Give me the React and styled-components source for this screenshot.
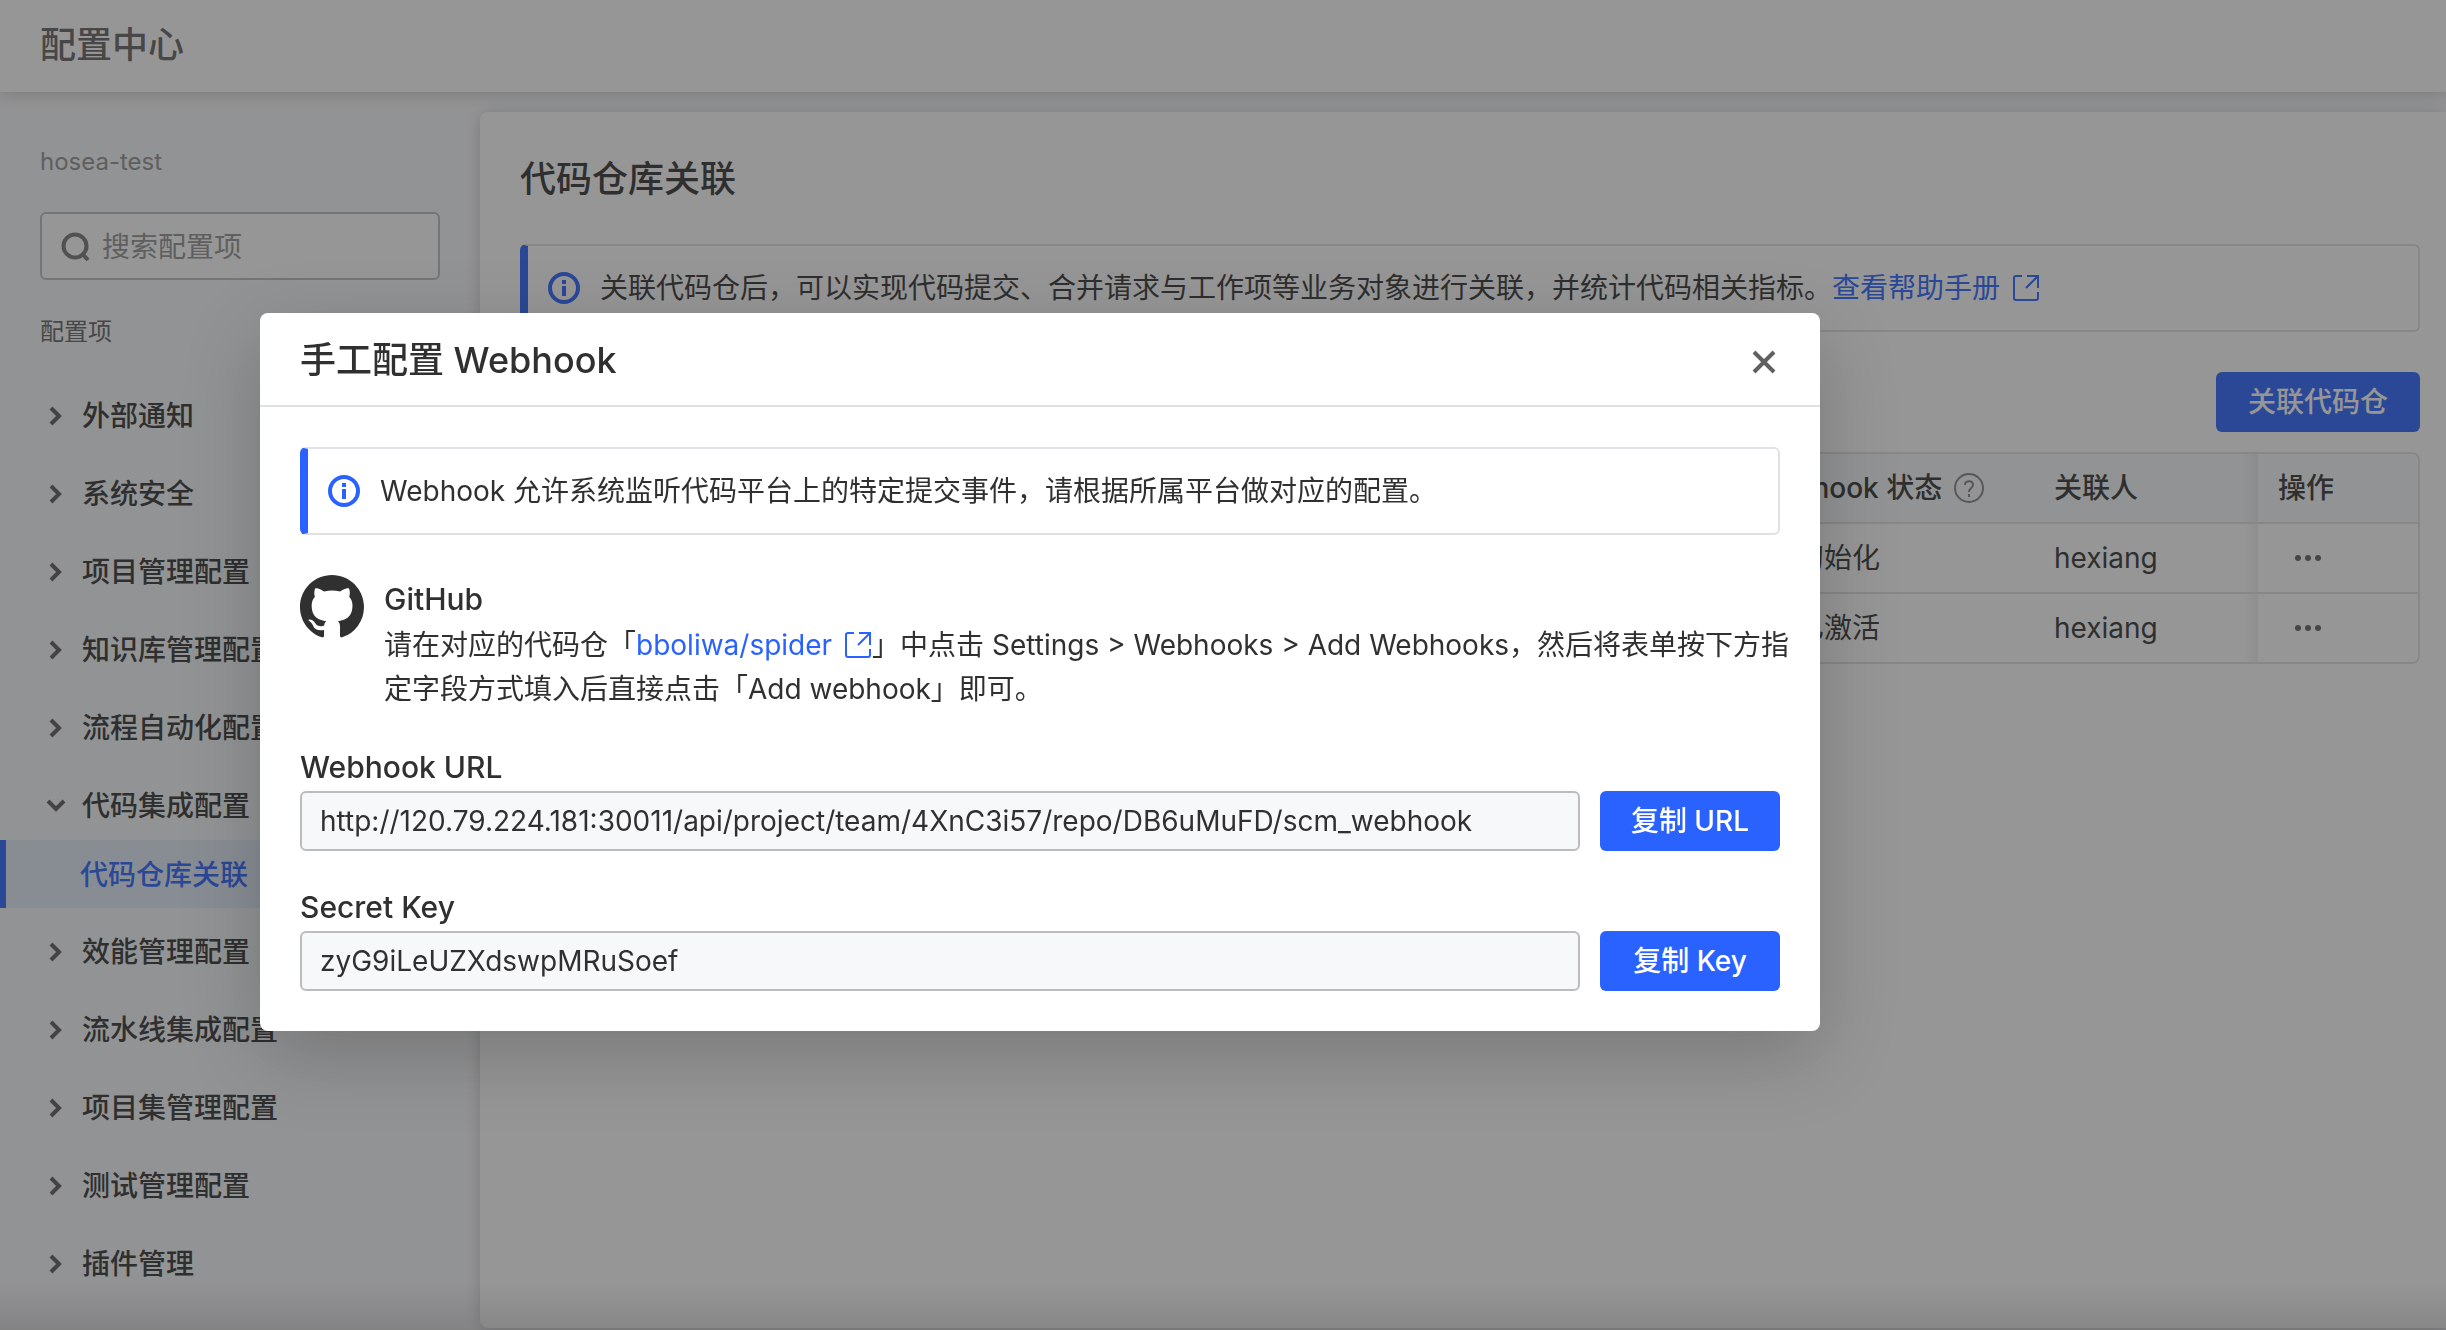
import React, { useState } from "react";
import styled, { createGlobalStyle } from "styled-components";

const menuGroups = [
  { name: "外部通知" },
  { name: "系统安全" },
  { name: "项目管理配置" },
  { name: "知识库管理配置" },
  { name: "流程自动化配置" },
  { name: "代码集成配置", children: ["代码仓库关联"] },
  { name: "效能管理配置" },
  { name: "流水线集成配置" },
  { name: "项目集管理配置" },
  { name: "测试管理配置" },
  { name: "插件管理" },
];

const repos = [
  { id: 1, status: "初始化", color: "#909090", owner: "hexiang" },
  { id: 2, status: "已激活", color: "#24b47e", owner: "hexiang" },
];

const SearchIcon = () => (
  <svg width="32" height="32" viewBox="0 0 32 32" fill="none" stroke="#747474" strokeWidth="4" aria-hidden="true">
    <circle cx="15" cy="15" r="11.5" />
    <path d="M22.5 23l5.5 6" />
  </svg>
);

const Chevron = ({ open }) => (
  <svg width="20" height="20" viewBox="0 0 20 20" fill="none" stroke="#585858" strokeWidth="4" aria-hidden="true">
    {open ? <path d="M2 5l8 8 8-8" /> : <path d="M5 2l8 8-8 8" />}
  </svg>
);

const InfoIcon = () => (
  <svg width="32" height="32" viewBox="0 0 32 32" fill="none" aria-hidden="true">
    <circle cx="16" cy="16" r="14" stroke="#2962ff" strokeWidth="4" />
    <path d="M14 8h4v4h-4zM14 14h4v10h-4z" fill="#2962ff" />
  </svg>
);

const ExternalIcon = () => (
  <svg width="28" height="28" viewBox="0 0 28 28" fill="none" stroke="currentColor" strokeWidth="2" aria-hidden="true">
    <path d="M10 2H4a2 2 0 0 0-2 2v20a2 2 0 0 0 2 2h20a2 2 0 0 0 2-2v-6" />
    <path d="M15 2h11v12M26 2L14 14" />
  </svg>
);

const HelpIcon = () => (
  <svg width="30" height="30" viewBox="0 0 30 30" fill="none" stroke="#808080" strokeWidth="2" aria-hidden="true">
    <circle cx="15" cy="15" r="14" />
    <path d="M11 12c0-5 8-5 8 0 0 3-4 3-4 7M15 21v3" />
  </svg>
);

const MoreIcon = () => (
  <svg width="28" height="8" viewBox="0 0 28 8" fill="#606060" aria-hidden="true">
    <circle cx="4" cy="4" r="3" />
    <circle cx="14" cy="4" r="3" />
    <circle cx="24" cy="4" r="3" />
  </svg>
);

const CloseIcon = () => (
  <svg width="24" height="24" viewBox="0 0 24 24" stroke="#606060" strokeWidth="4" aria-hidden="true">
    <path d="M2 2l20 20M22 2L2 22" />
  </svg>
);

const GithubIcon = () => (
  <svg width="64" height="64" viewBox="0 0 16 16" fill="#303030" aria-hidden="true">
    <path d="M8 0C3.58 0 0 3.58 0 8c0 3.54 2.29 6.53 5.47 7.59.4.07.55-.17.55-.38 0-.19-.01-.82-.01-1.49-2.01.37-2.53-.49-2.69-.94-.09-.23-.48-.94-.82-1.13-.28-.15-.68-.52-.01-.53.63-.01 1.08.58 1.23.82.72 1.21 1.87.87 2.33.66.07-.52.28-.87.51-1.07-1.78-.2-3.64-.89-3.64-3.95 0-.87.31-1.59.82-2.15-.08-.2-.36-1.02.08-2.12 0 0 .67-.21 2.2.82.64-.18 1.32-.27 2-.27.68 0 1.36.09 2 .27 1.53-1.04 2.2-.82 2.2-.82.44 1.1.16 1.92.08 2.12.51.56.82 1.27.82 2.15 0 3.07-1.87 3.75-3.65 3.95.29.25.54.73.54 1.48 0 1.07-.01 1.93-.01 2.2 0 .21.15.46.55.38A8.013 8.013 0 0016 8c0-4.42-3.58-8-8-8z" />
  </svg>
);

function Sidebar() {
  return (
    <Side>
      <TeamName>hosea-test</TeamName>
      <SearchBox>
        <SearchIcon />
        <input type="text" placeholder="搜索配置项" aria-label="搜索配置项" />
      </SearchBox>
      <SideLabel>配置项</SideLabel>
      <MenuList>
        {menuGroups.map((group) => (
          <li key={group.name}>
            <MenuButton type="button">
              <Chevron open={!!group.children} />
              {group.name}
            </MenuButton>
            {group.children &&
              group.children.map((child) => (
                <SubItem key={child} href="#">
                  {child}
                </SubItem>
              ))}
          </li>
        ))}
      </MenuList>
    </Side>
  );
}

function RepoTable() {
  return (
    <TableWrap>
      <Table>
        <thead>
          <tr>
            <Th />
            <Th $width={302}>
              <ThInner>
                Webhook 状态
                <HelpIcon />
              </ThInner>
            </Th>
            <Th $width={224} $edge>
              关联人
            </Th>
            <Th $width={160}>操作</Th>
          </tr>
        </thead>
        <tbody>
          {repos.map((repo) => (
            <tr key={repo.id}>
              <Td />
              <Td>
                <Status $color={repo.color}>{repo.status}</Status>
              </Td>
              <Td $edge>{repo.owner}</Td>
              <Td>
                <MoreButton type="button" aria-label="更多操作">
                  <MoreIcon />
                </MoreButton>
              </Td>
            </tr>
          ))}
        </tbody>
      </Table>
    </TableWrap>
  );
}

function WebhookModal({ onClose }) {
  return (
    <Overlay>
      <Modal role="dialog" aria-labelledby="modal-title">
        <ModalHeader>
          <ModalTitle id="modal-title">手工配置 Webhook</ModalTitle>
          <CloseButton type="button" aria-label="关闭" onClick={onClose}>
            <CloseIcon />
          </CloseButton>
        </ModalHeader>
        <ModalBody>
          <Notice>
            <InfoIcon />
            <span>Webhook 允许系统监听代码平台上的特定提交事件，请根据所属平台做对应的配置。</span>
          </Notice>
          <Platform>
            <GithubIcon />
            <div>
              <PlatformName>GitHub</PlatformName>
              <PlatformText>
                请在对应的代码仓「
                <Link href="#">
                  bboliwa/spider
                  <ExternalIcon />
                </Link>
                」中点击 Settings &gt; Webhooks &gt; Add Webhooks，然后将表单按下方指定字段方式填入后直接点击「Add
                webhook」即可。
              </PlatformText>
            </div>
          </Platform>
          <Field>
            <label htmlFor="webhook-url">Webhook URL</label>
            <FieldRow>
              <TextInput
                id="webhook-url"
                readOnly
                value="http://120.79.224.181:30011/api/project/team/4XnC3i57/repo/DB6uMuFD/scm_webhook"
              />
              <PrimaryButton type="button" $width={180}>
                复制 URL
              </PrimaryButton>
            </FieldRow>
          </Field>
          <Field>
            <label htmlFor="secret-key">Secret Key</label>
            <FieldRow>
              <TextInput id="secret-key" readOnly value="zyG9iLeUZXdswpMRuSoef" />
              <PrimaryButton type="button" $width={180}>
                复制 Key
              </PrimaryButton>
            </FieldRow>
          </Field>
        </ModalBody>
      </Modal>
    </Overlay>
  );
}

export default function App() {
  const [modalOpen, setModalOpen] = useState(true);

  return (
    <Page>
      <GlobalStyle />
      <TopBar>
        <h1>配置中心</h1>
      </TopBar>
      <Body>
        <Sidebar />
        <Panel>
          <PanelTitle>代码仓库关联</PanelTitle>
          <Notice>
            <InfoIcon />
            <span>
              关联代码仓后，可以实现代码提交、合并请求与工作项等业务对象进行关联，并统计代码相关指标。
              <Link href="#">
                查看帮助手册
                <ExternalIcon />
              </Link>
            </span>
          </Notice>
          <Toolbar>
            <PrimaryButton type="button" $width={204} onClick={() => setModalOpen(true)}>
              关联代码仓
            </PrimaryButton>
          </Toolbar>
          <RepoTable />
        </Panel>
      </Body>
      <BottomShade />
      {modalOpen && <WebhookModal onClose={() => setModalOpen(false)} />}
    </Page>
  );
}

const GlobalStyle = createGlobalStyle`
  *,
  *::before,
  *::after {
    box-sizing: border-box;
  }

  body {
    margin: 0;
    overflow: hidden;
    color: #303030;
    font-family: Inter, "Noto Sans CJK SC", sans-serif;
    font-size: 28px;
    line-height: 44px;
  }

  button,
  input {
    font: inherit;
    color: inherit;
  }

  h1,
  h2,
  h3,
  p,
  ul {
    margin: 0;
    padding: 0;
  }

  svg {
    flex: none;
  }
`;

const Page = styled.div`
  display: flex;
  flex-direction: column;
  height: 100vh;
  background: #f7f8fa;
`;

const TopBar = styled.header`
  display: flex;
  align-items: center;
  flex: none;
  height: 92px;
  padding: 0 40px 2px;
  background: #fff;
  box-shadow: 0 2px 16px rgba(0, 0, 0, 0.2);

  h1 {
    color: #606060;
    font-size: 36px;
    font-weight: 500;
  }
`;

const Body = styled.div`
  display: flex;
  flex: 1;
  min-height: 0;
`;

const Side = styled.aside`
  flex: none;
  width: 480px;
  padding-top: 48px;
`;

const TeamName = styled.div`
  padding: 0 40px;
  color: #909090;
  font-size: 24px;
`;

const SearchBox = styled.div`
  display: flex;
  align-items: center;
  gap: 10px;
  height: 68px;
  margin: 28px 40px 30px;
  padding: 2px 18px 0;
  border: 2px solid #babcc0;
  border-radius: 6px;
  background: #fff;

  input {
    flex: 1;
    min-width: 0;
    padding: 0;
    border: 0;
    outline: 0;
    background: none;
  }

  input::placeholder {
    color: #909090;
    opacity: 1;
  }
`;

const SideLabel = styled.div`
  padding: 0 40px;
  color: #606060;
  font-size: 24px;
`;

const MenuList = styled.ul`
  display: flex;
  flex-direction: column;
  gap: 10px;
  margin-top: 28px;
  list-style: none;
`;

const MenuButton = styled.button`
  display: flex;
  align-items: center;
  gap: 16px;
  width: 100%;
  height: 68px;
  padding: 0 46px;
  border: 0;
  background: none;
  font-weight: 500;
  cursor: pointer;
`;

const SubItem = styled.a`
  display: flex;
  align-items: center;
  height: 68px;
  padding: 2px 0 0 74px;
  border-left: 6px solid #2962ff;
  background: #e3edfa;
  color: #2962ff;
  font-weight: 500;
  text-decoration: none;
`;

const Panel = styled.main`
  flex: 1;
  min-width: 0;
  margin: 20px 0 2px;
  padding: 40px 26px 40px 40px;
  border-radius: 8px 0 0 8px;
  background: #fff;
  box-shadow: 0 2px 16px rgba(0, 0, 0, 0.2);
`;

const PanelTitle = styled.h2`
  margin-bottom: 38px;
  font-size: 36px;
  font-weight: 500;
  line-height: 54px;
`;

const Notice = styled.div`
  display: flex;
  align-items: center;
  gap: 20px;
  height: 88px;
  padding: 0 20px;
  border: 2px solid #e0e0e6;
  border-left: 8px solid #2962ff;
  border-radius: 6px;
`;

const Link = styled.a`
  color: #2962ff;
  text-decoration: none;

  svg {
    margin-left: 12px;
    vertical-align: -4px;
  }
`;

const Toolbar = styled.div`
  display: flex;
  justify-content: flex-end;
  margin: 40px 0 20px;
`;

const PrimaryButton = styled.button`
  flex: none;
  width: ${(props) => props.$width}px;
  height: 60px;
  padding: 0;
  border: 0;
  border-radius: 6px;
  background: #2962ff;
  color: #fff;
  font-weight: 500;
  cursor: pointer;
`;

const TableWrap = styled.div`
  overflow: hidden;
  border: 2px solid #e0e0e0;
  border-radius: 8px;
`;

const Table = styled.table`
  width: 100%;
  border-collapse: separate;
  border-spacing: 0;
  table-layout: fixed;

  tbody tr:last-child td {
    height: 68px;
    border-bottom: 0;
  }
`;

const edgeShade = "linear-gradient(to left, rgba(0, 0, 0, 0.06), rgba(0, 0, 0, 0)) right / 16px 100% no-repeat";

const Th = styled.th`
  width: ${(props) => (props.$width ? `${props.$width}px` : "auto")};
  height: 70px;
  padding: 0 20px;
  border-bottom: 2px solid #e0e0e0;
  background: ${(props) => (props.$edge ? `${edgeShade}, #f7f8fa` : "#f7f8fa")};
  font-weight: 500;
  text-align: left;
`;

const Td = styled.td`
  height: 70px;
  padding: 0 20px;
  border-bottom: 2px solid #e0e0e0;
  background: ${(props) => (props.$edge ? `${edgeShade}, #fff` : "#fff")};
`;

const ThInner = styled.div`
  display: flex;
  align-items: center;
  gap: 12px;
`;

const Status = styled.span`
  display: flex;
  align-items: center;
  gap: 28px;

  &::before {
    content: "";
    width: 16px;
    height: 16px;
    border-radius: 50%;
    background: ${(props) => props.$color};
  }
`;

const MoreButton = styled.button`
  display: flex;
  align-items: center;
  height: 40px;
  padding: 0 16px;
  border: 0;
  background: none;
  cursor: pointer;
`;

const BottomShade = styled.div`
  position: fixed;
  right: 0;
  bottom: 0;
  left: 0;
  height: 48px;
  background: linear-gradient(rgba(0, 0, 0, 0), rgba(0, 0, 0, 0.12));
`;

const Overlay = styled.div`
  position: fixed;
  inset: 0;
  padding: 313px 260px 40px;
  background: rgba(45, 45, 45, 0.5);
`;

const Modal = styled.div`
  max-width: 1560px;
  border-radius: 8px;
  background: #fff;
  box-shadow: 0 24px 80px rgba(0, 0, 0, 0.2);
`;

const ModalHeader = styled.div`
  display: flex;
  align-items: center;
  justify-content: space-between;
  height: 94px;
  padding: 2px 40px 0;
  border-bottom: 2px solid #e0e0e6;
`;

const ModalTitle = styled.h2`
  font-size: 36px;
  font-weight: 500;
`;

const CloseButton = styled.button`
  display: flex;
  padding: 8px 4px 4px;
  border: 0;
  background: none;
  cursor: pointer;
`;

const ModalBody = styled.div`
  padding: 40px;
`;

const Platform = styled.div`
  display: flex;
  align-items: flex-start;
  gap: 20px;
  margin: 40px -12px 32px 0;
`;

const PlatformName = styled.h3`
  font-size: 30px;
  font-weight: 500;
  line-height: 48px;
`;

const PlatformText = styled.p`
  line-height: 44px;
`;

const Field = styled.div`
  label {
    display: block;
    font-size: 30px;
    font-weight: 500;
    line-height: 48px;
  }

  & + & {
    margin-top: 32px;
  }
`;

const FieldRow = styled.div`
  display: flex;
  gap: 20px;
`;

const TextInput = styled.input`
  flex: 1;
  min-width: 0;
  height: 60px;
  padding: 0 18px;
  border: 2px solid #babcc0;
  border-radius: 6px;
  background: #f7f8fa;
  outline: 0;
`;
